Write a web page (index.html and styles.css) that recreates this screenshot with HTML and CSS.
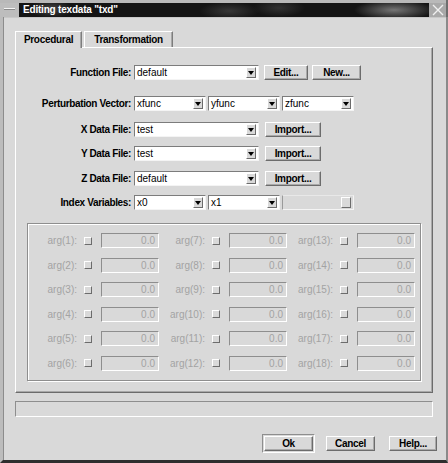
FILE: index.html
```html
<!DOCTYPE html>
<html>
<head>
<meta charset="utf-8">
<link rel="stylesheet" href="styles.css">
</head>
<body>
<div class="win">
  <div class="titlebar">
    <div class="tb-menu"><span class="tb-dash"></span></div>
    <div class="tb-title">Editing texdata "txd"</div>
    <div class="tb-close"><svg width="12" height="12" viewBox="0 0 12 12"><path d="M1 1L11 11M11 1L1 11" stroke="#f0f0f0" stroke-width="1.4" fill="none"/></svg></div>
  </div>
  <div class="main">
    <div class="tabs">
      <div class="tab active">Procedural</div>
      <div class="tab">Transformation</div>
    </div>
    <div class="panel">
      <div class="form">
        <div class="row r1">
          <span class="lbl">Function File:</span>
          <div class="combo w-long"><span class="val">default</span><span class="arrow"><svg width="6" height="4" viewBox="0 0 6 4"><path d="M0 0H6L3 4Z" fill="#000"/></svg></span></div>
          <button class="btn b-edit">Edit...</button>
          <button class="btn b-new">New...</button>
        </div>
        <div class="row r2">
          <span class="lbl">Perturbation Vector:</span>
          <div class="combo w-short"><span class="val">xfunc</span><span class="arrow"><svg width="6" height="4" viewBox="0 0 6 4"><path d="M0 0H6L3 4Z" fill="#000"/></svg></span></div>
          <div class="combo w-short"><span class="val">yfunc</span><span class="arrow"><svg width="6" height="4" viewBox="0 0 6 4"><path d="M0 0H6L3 4Z" fill="#000"/></svg></span></div>
          <div class="combo w-short"><span class="val">zfunc</span><span class="arrow"><svg width="6" height="4" viewBox="0 0 6 4"><path d="M0 0H6L3 4Z" fill="#000"/></svg></span></div>
        </div>
        <div class="row r3">
          <span class="lbl">X Data File:</span>
          <div class="combo w-long"><span class="val">test</span><span class="arrow"><svg width="6" height="4" viewBox="0 0 6 4"><path d="M0 0H6L3 4Z" fill="#000"/></svg></span></div>
          <button class="btn b-import">Import...</button>
        </div>
        <div class="row r4">
          <span class="lbl">Y Data File:</span>
          <div class="combo w-long"><span class="val">test</span><span class="arrow"><svg width="6" height="4" viewBox="0 0 6 4"><path d="M0 0H6L3 4Z" fill="#000"/></svg></span></div>
          <button class="btn b-import">Import...</button>
        </div>
        <div class="row r5">
          <span class="lbl">Z Data File:</span>
          <div class="combo w-long"><span class="val">default</span><span class="arrow"><svg width="6" height="4" viewBox="0 0 6 4"><path d="M0 0H6L3 4Z" fill="#000"/></svg></span></div>
          <button class="btn b-import">Import...</button>
        </div>
        <div class="row r6">
          <span class="lbl">Index Variables:</span>
          <div class="combo w-short"><span class="val">x0</span><span class="arrow"><svg width="6" height="4" viewBox="0 0 6 4"><path d="M0 0H6L3 4Z" fill="#000"/></svg></span></div>
          <div class="combo w-short"><span class="val">x1</span><span class="arrow"><svg width="6" height="4" viewBox="0 0 6 4"><path d="M0 0H6L3 4Z" fill="#000"/></svg></span></div>
          <div class="combo w-short off"><span class="val"></span><span class="arrow blank"></span></div>
        </div>
      </div>
      <div class="group">
        <div class="args">
          <div class="arg"><span class="alb">arg(1):</span><span class="cb"></span><span class="af">0.0</span></div>
          <div class="arg"><span class="alb">arg(7):</span><span class="cb"></span><span class="af">0.0</span></div>
          <div class="arg"><span class="alb">arg(13):</span><span class="cb"></span><span class="af">0.0</span></div>
          <div class="arg"><span class="alb">arg(2):</span><span class="cb"></span><span class="af">0.0</span></div>
          <div class="arg"><span class="alb">arg(8):</span><span class="cb"></span><span class="af">0.0</span></div>
          <div class="arg"><span class="alb">arg(14):</span><span class="cb"></span><span class="af">0.0</span></div>
          <div class="arg"><span class="alb">arg(3):</span><span class="cb"></span><span class="af">0.0</span></div>
          <div class="arg"><span class="alb">arg(9):</span><span class="cb"></span><span class="af">0.0</span></div>
          <div class="arg"><span class="alb">arg(15):</span><span class="cb"></span><span class="af">0.0</span></div>
          <div class="arg"><span class="alb">arg(4):</span><span class="cb"></span><span class="af">0.0</span></div>
          <div class="arg"><span class="alb">arg(10):</span><span class="cb"></span><span class="af">0.0</span></div>
          <div class="arg"><span class="alb">arg(16):</span><span class="cb"></span><span class="af">0.0</span></div>
          <div class="arg"><span class="alb">arg(5):</span><span class="cb"></span><span class="af">0.0</span></div>
          <div class="arg"><span class="alb">arg(11):</span><span class="cb"></span><span class="af">0.0</span></div>
          <div class="arg"><span class="alb">arg(17):</span><span class="cb"></span><span class="af">0.0</span></div>
          <div class="arg"><span class="alb">arg(6):</span><span class="cb"></span><span class="af">0.0</span></div>
          <div class="arg"><span class="alb">arg(12):</span><span class="cb"></span><span class="af">0.0</span></div>
          <div class="arg"><span class="alb">arg(18):</span><span class="cb"></span><span class="af">0.0</span></div>
        </div>
      </div>
    </div>
    <div class="progress"></div>
    <div class="buttons">
      <div class="deflt"><button class="btn b-ok">Ok</button></div>
      <button class="btn b-cancel">Cancel</button>
      <button class="btn b-help">Help...</button>
    </div>
  </div>
</div>
</body>
</html>
```
FILE: styles.css
```css
* { box-sizing: border-box; margin: 0; padding: 0; }
html, body { width: 448px; height: 463px; overflow: hidden; }
body {
  background: #d9d9d9;
  font-family: "Liberation Sans", Arial, sans-serif;
  font-size: 10px;
  color: #000;
}
.win { width: 448px; height: 463px; display: flex; flex-direction: column; }

.titlebar {
  height: 17px;
  display: flex;
  background: #b9b9b9;
  padding-top: 3px;
  border-right: 2px solid #6e6e6e;
}
.tb-menu {
  width: 19px;
  display: flex;
  align-items: center;
  justify-content: center;
  background: #bdbdbd;
}
.tb-dash { width: 11px; height: 2px; background: #f4f4f4; border-bottom: 1px solid #8a8a8a; margin-top: -2px; }
.tb-title {
  flex: 1;
  color: #fff;
  font-weight: bold;
  font-size: 10px;
  letter-spacing: -0.2px;
  line-height: 14px;
  padding-left: 4px;
  background:
    radial-gradient(ellipse 22px 9px at 32px 6px, rgba(110,110,110,0.55), rgba(0,0,0,0)),
    radial-gradient(ellipse 30px 9px at 210px 8px, rgba(90,90,90,0.5), rgba(0,0,0,0)),
    radial-gradient(ellipse 26px 9px at 260px 5px, rgba(80,80,80,0.5), rgba(0,0,0,0)),
    radial-gradient(ellipse 40px 10px at 375px 7px, rgba(150,150,150,0.75), rgba(0,0,0,0)),
    #141414;
}
.tb-close {
  width: 17px;
  display: flex;
  align-items: center;
  justify-content: center;
  background: #a9a9a9;
}

.main {
  flex: 1;
  border-left: 3px solid #bcbcbc;
  border-right: 2px solid #8a8a8a;
  border-bottom: 3px solid #2e2e2e;
  box-shadow: inset 1px 0 0 #8c8c8c, inset 0 1px 0 #c8c8c8;
  display: flex;
  flex-direction: column;
}

.tabs { display: flex; margin: 13px 0 0 12px; height: 17px; align-items: flex-end; }
.tab {
  height: 16px;
  padding: 0 6px;
  font-weight: bold;
  letter-spacing: -0.3px;
  line-height: 15px;
  text-align: center;
  border-top: 1px solid #fff;
  border-left: 1px solid #fff;
  border-right: 1px solid #7d7d7d;
  box-shadow: inset -1px 0 0 #a8a8a8;
}
.tab.active { width: 67px; height: 17px; line-height: 16px; margin-bottom: -1px; background: #d9d9d9; position: relative; z-index: 1; }
.tab + .tab { width: 89px; margin-left: 2px; }

.panel {
  margin-left: 12px;
  width: 418px;
  height: 346px;
  border-top: 1px solid #fff;
  border-left: 1px solid #fff;
  border-right: 1px solid #6c6c6c;
  border-bottom: 1px solid #6c6c6c;
  box-shadow: inset -1px -1px 0 #a9a9a9;
}
.form { padding-top: 17px; }
.row { display: flex; align-items: center; height: 15px; }
.r2 { margin-top: 16px; }
.r3 { margin-top: 11px; }
.r4 { margin-top: 9px; }
.r5 { margin-top: 10px; }
.r6 { margin-top: 9px; }
.lbl {
  width: 115px;
  text-align: right;
  font-weight: bold;
  letter-spacing: -0.35px;
  margin-right: 3px;
  white-space: nowrap;
}
.combo {
  height: 15px;
  display: flex;
  align-items: center;
  background: #fff;
  border-top: 1px solid #7c7c7c;
  border-left: 1px solid #7c7c7c;
  border-right: 1px solid #f4f4f4;
  border-bottom: 1px solid #f4f4f4;
}
.w-long { width: 125px; }
.w-short { width: 72px; margin-right: 2px; }
.val { flex: 1; padding-left: 2px; line-height: 13px; overflow: hidden; white-space: nowrap; }
.arrow {
  width: 10px;
  height: 11px;
  margin-right: 2px;
  background: #d9d9d9;
  border-top: 1px solid #fff;
  border-left: 1px solid #fff;
  border-right: 1px solid #6c6c6c;
  border-bottom: 1px solid #6c6c6c;
  display: flex;
  align-items: center;
  justify-content: center;
}
.arrow svg { display: block; }
.combo.off { background: #d9d9d9; border-left-color: #9a9a9a; border-top-color: #e8e8e8; }

.btn {
  font-family: "Liberation Sans", Arial, sans-serif;
  font-size: 10px;
  font-weight: bold;
  letter-spacing: -0.3px;
  color: #000;
  height: 15px;
  line-height: 12px;
  background: #d9d9d9;
  border-top: 1px solid #fff;
  border-left: 1px solid #fff;
  border-right: 1px solid #6c6c6c;
  border-bottom: 1px solid #6c6c6c;
  box-shadow: inset -1px -1px 0 #a9a9a9;
  text-align: center;
  padding: 0;
}
.b-edit { width: 44px; margin-left: 5px; }
.b-new { width: 49px; margin-left: 4px; }
.b-import { width: 56px; margin-left: 6px; }

.group {
  margin: 13px 0 0 11px;
  width: 394px;
  height: 158px;
  border: 1px solid #8e8e8e;
  box-shadow: inset 1px 1px 0 #fff, 1px 1px 0 #fff;
  padding: 9px 0 0 3px;
}
.args {
  display: grid;
  grid-template-columns: repeat(3, 128px);
  grid-auto-rows: 15px;
  row-gap: 9.6px;
}
.arg { display: flex; align-items: center; color: #a3a3a3; }
.alb { width: 46px; text-align: right; white-space: nowrap; margin-right: 7px; }
.cb {
  width: 8px;
  height: 8px;
  margin-right: 9px;
  background: #d9d9d9;
  border-top: 1px solid #fff;
  border-left: 1px solid #fff;
  border-right: 1px solid #6c6c6c;
  border-bottom: 1px solid #6c6c6c;
}
.af {
  width: 58px;
  height: 15px;
  line-height: 13px;
  text-align: right;
  padding-right: 3px;
  border-top: 1px solid #8e8e8e;
  border-left: 1px solid #8e8e8e;
  border-right: 1px solid #fff;
  border-bottom: 1px solid #fff;
  color: #a3a3a3;
}

.progress {
  margin: 8px 0 0 12px;
  width: 418px;
  height: 16px;
  border-top: 1px solid #8e8e8e;
  border-left: 1px solid #8e8e8e;
  border-right: 1px solid #fff;
  border-bottom: 1px solid #fff;
}

.buttons {
  display: flex;
  align-items: center;
  margin-top: 17px;
  padding-left: 259px;
}
.deflt {
  width: 53px;
  height: 19px;
  padding: 1px;
  border-top: 1px solid #8e8e8e;
  border-left: 1px solid #8e8e8e;
  border-right: 1px solid #fff;
  border-bottom: 1px solid #fff;
  display: flex;
}
.b-ok { width: 49px; height: 15px; }
.b-cancel { width: 49px; margin-left: 11px; }
.b-help { width: 48px; margin-left: 14px; }
```
